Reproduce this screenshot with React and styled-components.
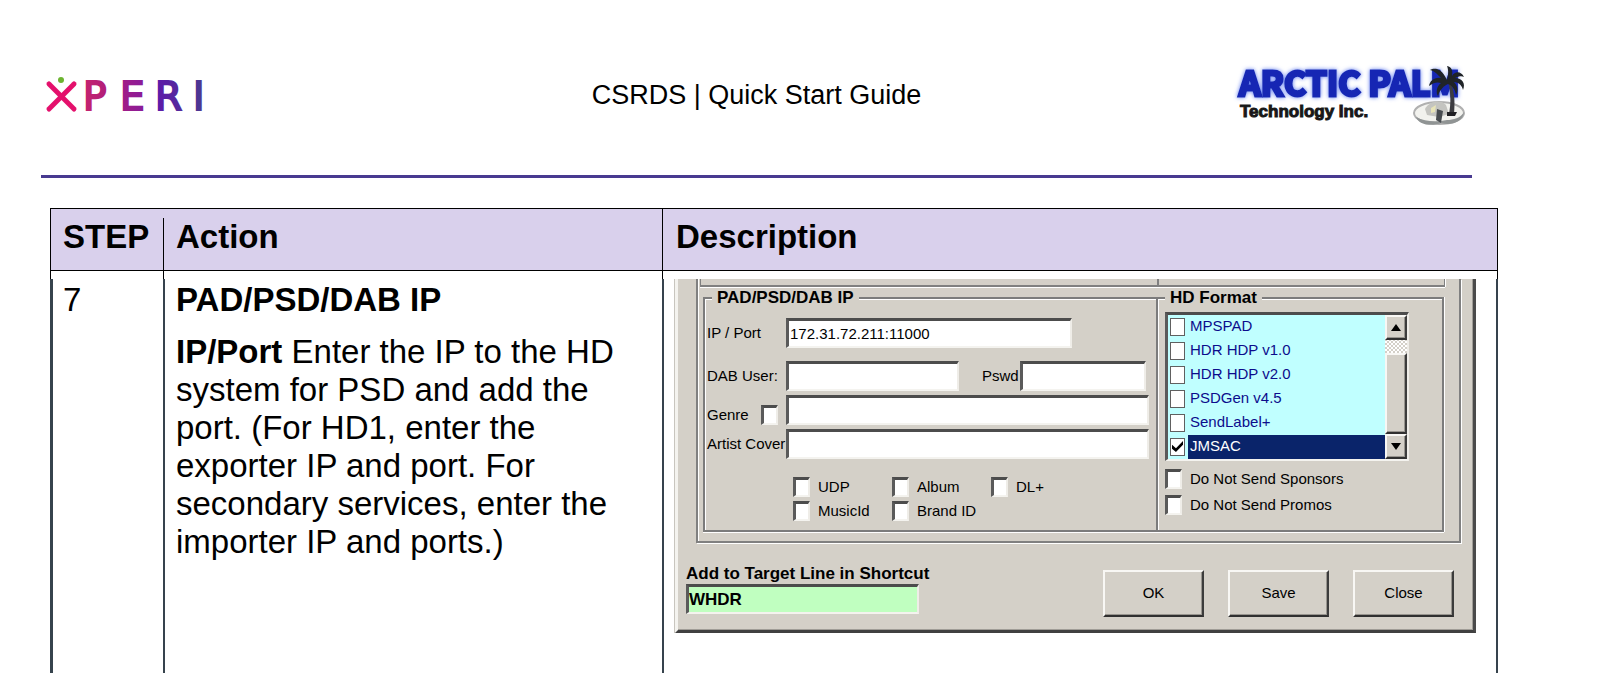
import React from "react";
import styled, { createGlobalStyle, css } from "styled-components";

const face = "#d4d0c8";
const ui = '"Liberation Sans", Arial, sans-serif';

const GlobalStyle = createGlobalStyle`
  * { box-sizing: border-box; }
  body { margin: 0; background: #fff; color: #000; font-family: "Liberation Sans", Arial, sans-serif; }
  p { margin: 0; }
`;

const Page = styled.div`
  padding: 54px 110px 0 50px;
`;

const Header = styled.header`
  display: grid;
  grid-template-columns: 1fr auto 1fr;
  align-items: center;
  margin: 0 26px 30px -9px;
  padding-bottom: 39px;
  border-bottom: 3px solid #483a90;
`;

const HeaderTitle = styled.h1`
  margin: 0;
  font-size: 27px;
  font-weight: 400;
  line-height: 32px;
`;

const XperiMark = styled.svg`
  display: block;
  width: 170px;
  height: 58px;
  margin-left: 3px;
`;

const PalmMark = styled.svg`
  display: block;
  justify-self: end;
  width: 236px;
  height: 82px;
  margin-right: 3px;
`;

const StepTable = styled.table`
  width: 100%;
  table-layout: fixed;
  border-collapse: separate;
  border-spacing: 0;
  font-size: 33px;
  line-height: 38px;
  text-align: left;
`;

const StepCol = styled.col`
  width: ${(p) => p.$w};
`;

const HeadCell = styled.th`
  padding: 9px 12px 14px ${(p) => (p.$last ? "14px" : "13px")};
  border-top: 1px solid #000;
  border-bottom: 1px solid #000;
  background: linear-gradient(#000, #000) 0 ${(p) => (p.$gap ? "9px" : "0")} / 1px 100% no-repeat,
    ${(p) => p.$last && "linear-gradient(#000, #000) 100% 0 / 1px 100% no-repeat,"} #d9d0ec;
  font-weight: 700;
`;

const rule = (x, w = "2px") => `linear-gradient(#000, #000) ${x} 0 / 1px 8px no-repeat,
  linear-gradient(#36434d, #36434d) ${x} 8px / ${w} 100% no-repeat`;

const BodyCell = styled.td`
  padding: ${(p) => (p.$last ? "8px 22px 40px 13px" : "10px 12px 40px 13px")};
  vertical-align: top;
  background: ${(p) => rule("0", p.$first ? "3px" : "2px")}${(p) => p.$last && `, ${rule("100%")}`};
`;

const ActionTitle = styled.p`
  margin-bottom: 14px;
  font-weight: 700;
`;

const Dialog = styled.form`
  border: 3px solid;
  border-width: 0 3px 3px;
  border-color: #fff #4a4a4a #404040 #f4f3ef;
  box-shadow: inset -1px -1px #a09d97, -1px 0 #c8c5be;
  background: ${face};
  font-family: ${ui};
  font-size: 15px;
  line-height: 20px;
`;

const Frame = styled.div`
  margin: 0 12px 0 18px;
  padding-bottom: 9px;
  border: 2px solid #808080;
  border-top: 0;
  box-shadow: 1px 1px #fff, inset 1px 0 #fff;
`;

const UpperGroups = styled.div`
  display: grid;
  grid-template-columns: 1fr 287px;
  height: 9px;
  margin: 0 14px 0 2px;
`;

const UpperGroup = styled.div`
  height: 8px;
  border: solid #808080;
  border-width: 0 1px 2px;
  box-shadow: 0 1px #fff, 1px 0 #fff;
`;

const Groups = styled.div`
  display: grid;
  grid-template-columns: 1fr 288px;
  margin: 0 15px 0 5px;
`;

const Group = styled.fieldset`
  min-width: 0;
  margin: 0;
  padding: ${(p) => p.$pad};
  border: 2px solid #7c7c7c;
  ${(p) => p.$joined && css`border-right: 0;`}
  box-shadow: 0 1px #fff, inset 1px 1px #fff ${(p) => !p.$joined && ", 1px 0 #fff"};
`;

const GroupTitle = styled.legend`
  margin-left: ${(p) => p.$x};
  padding: 0 5px;
  background: ${face};
  font-size: 17px;
  font-weight: 700;
  line-height: 20px;
`;

const Rows = styled.div`
  display: flex;
  flex-direction: column;
  gap: 4px;
`;

const Row = styled.div`
  display: flex;
  align-items: ${(p) => p.$align || "center"};
  margin-bottom: ${(p) => (p.$spaced ? "9px" : "0")};
`;

const RowLabel = styled.label`
  width: ${(p) => p.$w || "81px"};
  flex: none;
  padding-left: ${(p) => (p.$flush ? "0" : "2px")};
  white-space: nowrap;
`;

const sunken = css`
  border: 3px solid;
  border-width: 3px 2px 2px 3px;
  border-color: #4c4c4c #efede8 #f4f3ef #5a5a5a;
`;

const Field = styled.input`
  ${sunken}
  width: ${(p) => p.$w || "auto"};
  flex: ${(p) => (p.$w ? "none" : "1")};
  min-width: 0;
  height: 30px;
  padding: 0 1px;
  border-radius: 0;
  outline: 0;
  background: #fff;
  color: #000;
  font-family: ${ui};
  font-size: 15px;
`;

const ShortcutField = styled(Field)`
  display: block;
  padding: 0;
  background: #c0ffc0;
  font-size: 17px;
  font-weight: 700;
`;

const PasswordLabel = styled(RowLabel)`
  margin-left: 23px;
`;

const Tick = styled.input.attrs({ type: "checkbox" })`
  ${sunken}
  appearance: none;
  flex: none;
  width: 17px;
  height: 20px;
  margin: 0;
  background: #fff;
`;

const GenreTick = styled(Tick)`
  margin-right: 8px;
`;

const Ticks = styled.div`
  display: grid;
  grid-template-columns: repeat(3, 99px);
  gap: 4px 0;
  margin: 18px 0 0 88px;
`;

const TickLabel = styled.label`
  display: flex;
  align-items: center;
  gap: 8px;
  white-space: nowrap;
`;

const FormatBox = styled.div`
  ${sunken}
  display: grid;
  grid-template-columns: 1fr 22px;
  width: 244px;
  margin-bottom: 8px;
  background: #c0ffff;
`;

const FormatList = styled.ul`
  margin: 0;
  padding: 0;
  list-style: none;
`;

const FormatItem = styled.label`
  display: flex;
  align-items: center;
  height: 24px;
  padding-left: 2px;
  color: #0c0c8c;
`;

const FormatTick = styled.input.attrs({ type: "checkbox" })`
  appearance: none;
  position: relative;
  flex: none;
  width: 15px;
  height: 18px;
  margin: 0 3px 0 0;
  border: 1px solid #606060;
  background: #fff;

  &:checked::after {
    content: "";
    position: absolute;
    inset: 2px 1px 3px 1px;
    background: #000;
    clip-path: polygon(0 35%, 36% 65%, 100% 0, 100% 34%, 36% 100%, 0 70%);
  }
`;

const FormatName = styled.span`
  flex: 1;
  height: 24px;
  padding-left: 2px;
  line-height: 22px;
  ${(p) => p.$on && css`background: #0a246a; color: #fff;`}
`;

const ScrollBar = styled.div`
  display: grid;
  grid-template-rows: 25px 1fr 81px 25px;
  background: repeating-conic-gradient(#fff 0 25%, ${face} 0 50%) 0 0 / 4px 4px;
`;

const raised = css`
  border: 2px solid;
  border-color: #f8f7f4 #3c3c3c #303030 #f8f7f4;
  box-shadow: inset -1px -1px #98958f;
  background: ${face};
`;

const ScrollButton = styled.button`
  ${raised}
  display: grid;
  place-items: center;
  padding: 0;

  svg { display: block; }
`;

const ScrollThumb = styled.div`
  ${raised}
`;

const SendOptions = styled.div`
  display: grid;
  gap: 6px;
`;

const BottomBar = styled.div`
  display: flex;
  justify-content: space-between;
  align-items: flex-end;
  padding: 20px 19px 13px 8px;
`;

const Shortcut = styled.div`
  padding-bottom: 3px;
`;

const ShortcutLabel = styled.label`
  display: block;
  font-size: 17px;
  font-weight: 700;
  line-height: 21px;
`;

const Buttons = styled.div`
  display: flex;
  gap: 24px;
`;

const PushButton = styled.button`
  ${raised}
  width: 101px;
  height: 47px;
  padding: 0 0 2px;
  color: #000;
  font-family: ${ui};
  font-size: 15px;
`;

function XperiLogo() {
  return (
    <XperiMark viewBox="0 -8 170 58" role="img" aria-label="Xperi">
      <defs>
        <linearGradient id="xperi" gradientUnits="userSpaceOnUse" x1="36" y1="0" x2="158" y2="0">
          <stop offset="0" stopColor="#c8246c" />
          <stop offset="0.3" stopColor="#a81c80" />
          <stop offset="0.5" stopColor="#8c1c98" />
          <stop offset="0.65" stopColor="#5c1ca8" />
          <stop offset="1" stopColor="#4c3890" />
        </linearGradient>
      </defs>
      <g fill="none" stroke="#e4106c" strokeWidth="5" strokeLinecap="round">
        <path d="M5 10 L30 35" />
        <path d="M30 10 L5 35" />
      </g>
      <circle cx="17" cy="6" r="3" fill="#6cb430" />
      <text
        x="39 76 111 149"
        y="36"
        fontFamily='"DejaVu Sans", sans-serif'
        fontSize="39"
        fill="url(#xperi)"
        stroke="url(#xperi)"
        strokeWidth="2"
      >
        PERI
      </text>
    </XperiMark>
  );
}

function ArcticPalmLogo() {
  return (
    <PalmMark viewBox="0 -8 236 82" role="img" aria-label="Arctic Palm Technology Inc.">
      <defs>
        <filter id="halo" x="-5%" y="-20%" width="110%" height="140%">
          <feDropShadow dx="0" dy="0" stdDeviation="2" floodColor="#5c78f0" />
        </filter>
      </defs>
      <text x="6" y="34" fontFamily='"Noto Sans CJK JP", sans-serif' fontSize="34" fontWeight="700" fill="#1428b4" stroke="#1428b4" strokeWidth="3" filter="url(#halo)">
        ARCTIC PALM
      </text>
      <text x="7" y="55" fontFamily='"Liberation Sans", sans-serif' fontSize="17" fontWeight="700" fill="#181818" stroke="#181818" strokeWidth="1">
        Technology Inc.
      </text>
      <ellipse cx="206" cy="51" rx="25" ry="11" fill="#f2f2ee" stroke="#b0b0b0" strokeWidth="2" />
      <path d="M183 55 C186 64 200 64 208 61 C218 64 230 60 231 50 C228 56 220 58 214 58 C204 60 192 60 183 55Z" fill="#909494" />
      <path d="M192 47 C196 39 208 37 213 43 L216 52 L206 55 L194 53Z" fill="#c4c4c0" />
      <path d="M204 47 L210 49 L208 61 L203 58Z" fill="#484c50" />
      <path d="M198 46 L203 43 L202 50 L198 51Z" fill="#e8e4b8" />
      <path d="M217 19 C222 30 222 41 221 52 L216 52 C218 42 218 30 215 20Z" fill="#3c3c40" />
      <path d="M214 50 L224 50 L222 54 L214 54Z" fill="#202024" />
      <path d="M214 18 C208 5 201 6 197 8 C202 9 205 13 208 16 C201 15 197 19 196 24 C201 20 205 20 208 21 C203 25 203 31 205 34 C207 27 211 24 215 22 C220 24 222 28 223 33 C226 28 224 23 221 20 C226 20 229 24 230 28 C233 21 229 16 222 16 C226 14 229 14 231 15 C228 9 222 9 219 14 C220 9 219 5 214 4 C216 9 215 14 214 18Z" fill="#202428" />
    </PalmMark>
  );
}

const formats = ["MPSPAD", "HDR HDP v1.0", "HDR HDP v2.0", "PSDGen v4.5", "SendLabel+", "JMSAC"];
const outputs = ["UDP", "Album", "DL+", "MusicId", "Brand ID"];

function SettingsDialog() {
  return (
    <Dialog onSubmit={(e) => e.preventDefault()}>
      <Frame>
        <UpperGroups>
          <UpperGroup />
          <UpperGroup />
        </UpperGroups>
        <Groups>
          <Group $joined $pad="10px 7px 9px 0">
            <GroupTitle $x="7px">PAD/PSD/DAB IP</GroupTitle>
            <Rows>
              <Row $spaced>
                <RowLabel htmlFor="ip">IP / Port</RowLabel>
                <Field id="ip" $w="286px" defaultValue="172.31.72.211:11000" />
              </Row>
              <Row>
                <RowLabel htmlFor="user">DAB User:</RowLabel>
                <Field id="user" $w="173px" />
                <PasswordLabel htmlFor="pswd" $w="38px" $flush>Pswd</PasswordLabel>
                <Field id="pswd" $w="126px" />
              </Row>
              <Row $align="flex-end">
                <RowLabel htmlFor="genre" $w="56px">Genre</RowLabel>
                <GenreTick aria-label="Use genre" />
                <Field id="genre" />
              </Row>
              <Row>
                <RowLabel htmlFor="cover">Artist Cover</RowLabel>
                <Field id="cover" />
              </Row>
            </Rows>
            <Ticks>
              {outputs.map((name) => (
                <TickLabel key={name}>
                  <Tick />
                  {name}
                </TickLabel>
              ))}
            </Ticks>
          </Group>
          <Group $pad="4px 0 13px 7px">
            <GroupTitle $x="0px">HD Format</GroupTitle>
            <FormatBox>
              <FormatList>
                {formats.map((name) => (
                  <li key={name}>
                    <FormatItem>
                      <FormatTick defaultChecked={name === "JMSAC"} />
                      <FormatName $on={name === "JMSAC"}>{name}</FormatName>
                    </FormatItem>
                  </li>
                ))}
              </FormatList>
              <ScrollBar>
                <ScrollButton type="button" aria-label="Scroll up">
                  <svg width="10" height="7"><path d="M0 7 L5 0 L10 7Z" /></svg>
                </ScrollButton>
                <span />
                <ScrollThumb />
                <ScrollButton type="button" aria-label="Scroll down">
                  <svg width="10" height="7"><path d="M0 0 L5 7 L10 0Z" /></svg>
                </ScrollButton>
              </ScrollBar>
            </FormatBox>
            <SendOptions>
              <TickLabel><Tick />Do Not Send Sponsors</TickLabel>
              <TickLabel><Tick />Do Not Send Promos</TickLabel>
            </SendOptions>
          </Group>
        </Groups>
      </Frame>
      <BottomBar>
        <Shortcut>
          <ShortcutLabel htmlFor="target">Add to Target Line in Shortcut</ShortcutLabel>
          <ShortcutField id="target" $w="233px" defaultValue="WHDR" />
        </Shortcut>
        <Buttons>
          <PushButton type="submit">OK</PushButton>
          <PushButton type="button">Save</PushButton>
          <PushButton type="button">Close</PushButton>
        </Buttons>
      </BottomBar>
    </Dialog>
  );
}

export default function App() {
  return (
    <Page>
      <GlobalStyle />
      <Header>
        <XperiLogo />
        <HeaderTitle>CSRDS | Quick Start Guide</HeaderTitle>
        <ArcticPalmLogo />
      </Header>
      <StepTable>
        <colgroup>
          <StepCol $w="113px" />
          <StepCol $w="499px" />
          <StepCol $w="auto" />
        </colgroup>
        <thead>
          <tr>
            <HeadCell scope="col">STEP</HeadCell>
            <HeadCell scope="col" $gap>Action</HeadCell>
            <HeadCell scope="col" $last>Description</HeadCell>
          </tr>
        </thead>
        <tbody>
          <tr>
            <BodyCell $first>7</BodyCell>
            <BodyCell>
              <ActionTitle>PAD/PSD/DAB IP</ActionTitle>
              <p>
                <b>IP/Port</b> Enter the IP to the HD system for PSD and add the port. (For HD1, enter the exporter IP and
                port. For secondary services, enter the importer IP and ports.)
              </p>
            </BodyCell>
            <BodyCell $last>
              <SettingsDialog />
            </BodyCell>
          </tr>
        </tbody>
      </StepTable>
    </Page>
  );
}
